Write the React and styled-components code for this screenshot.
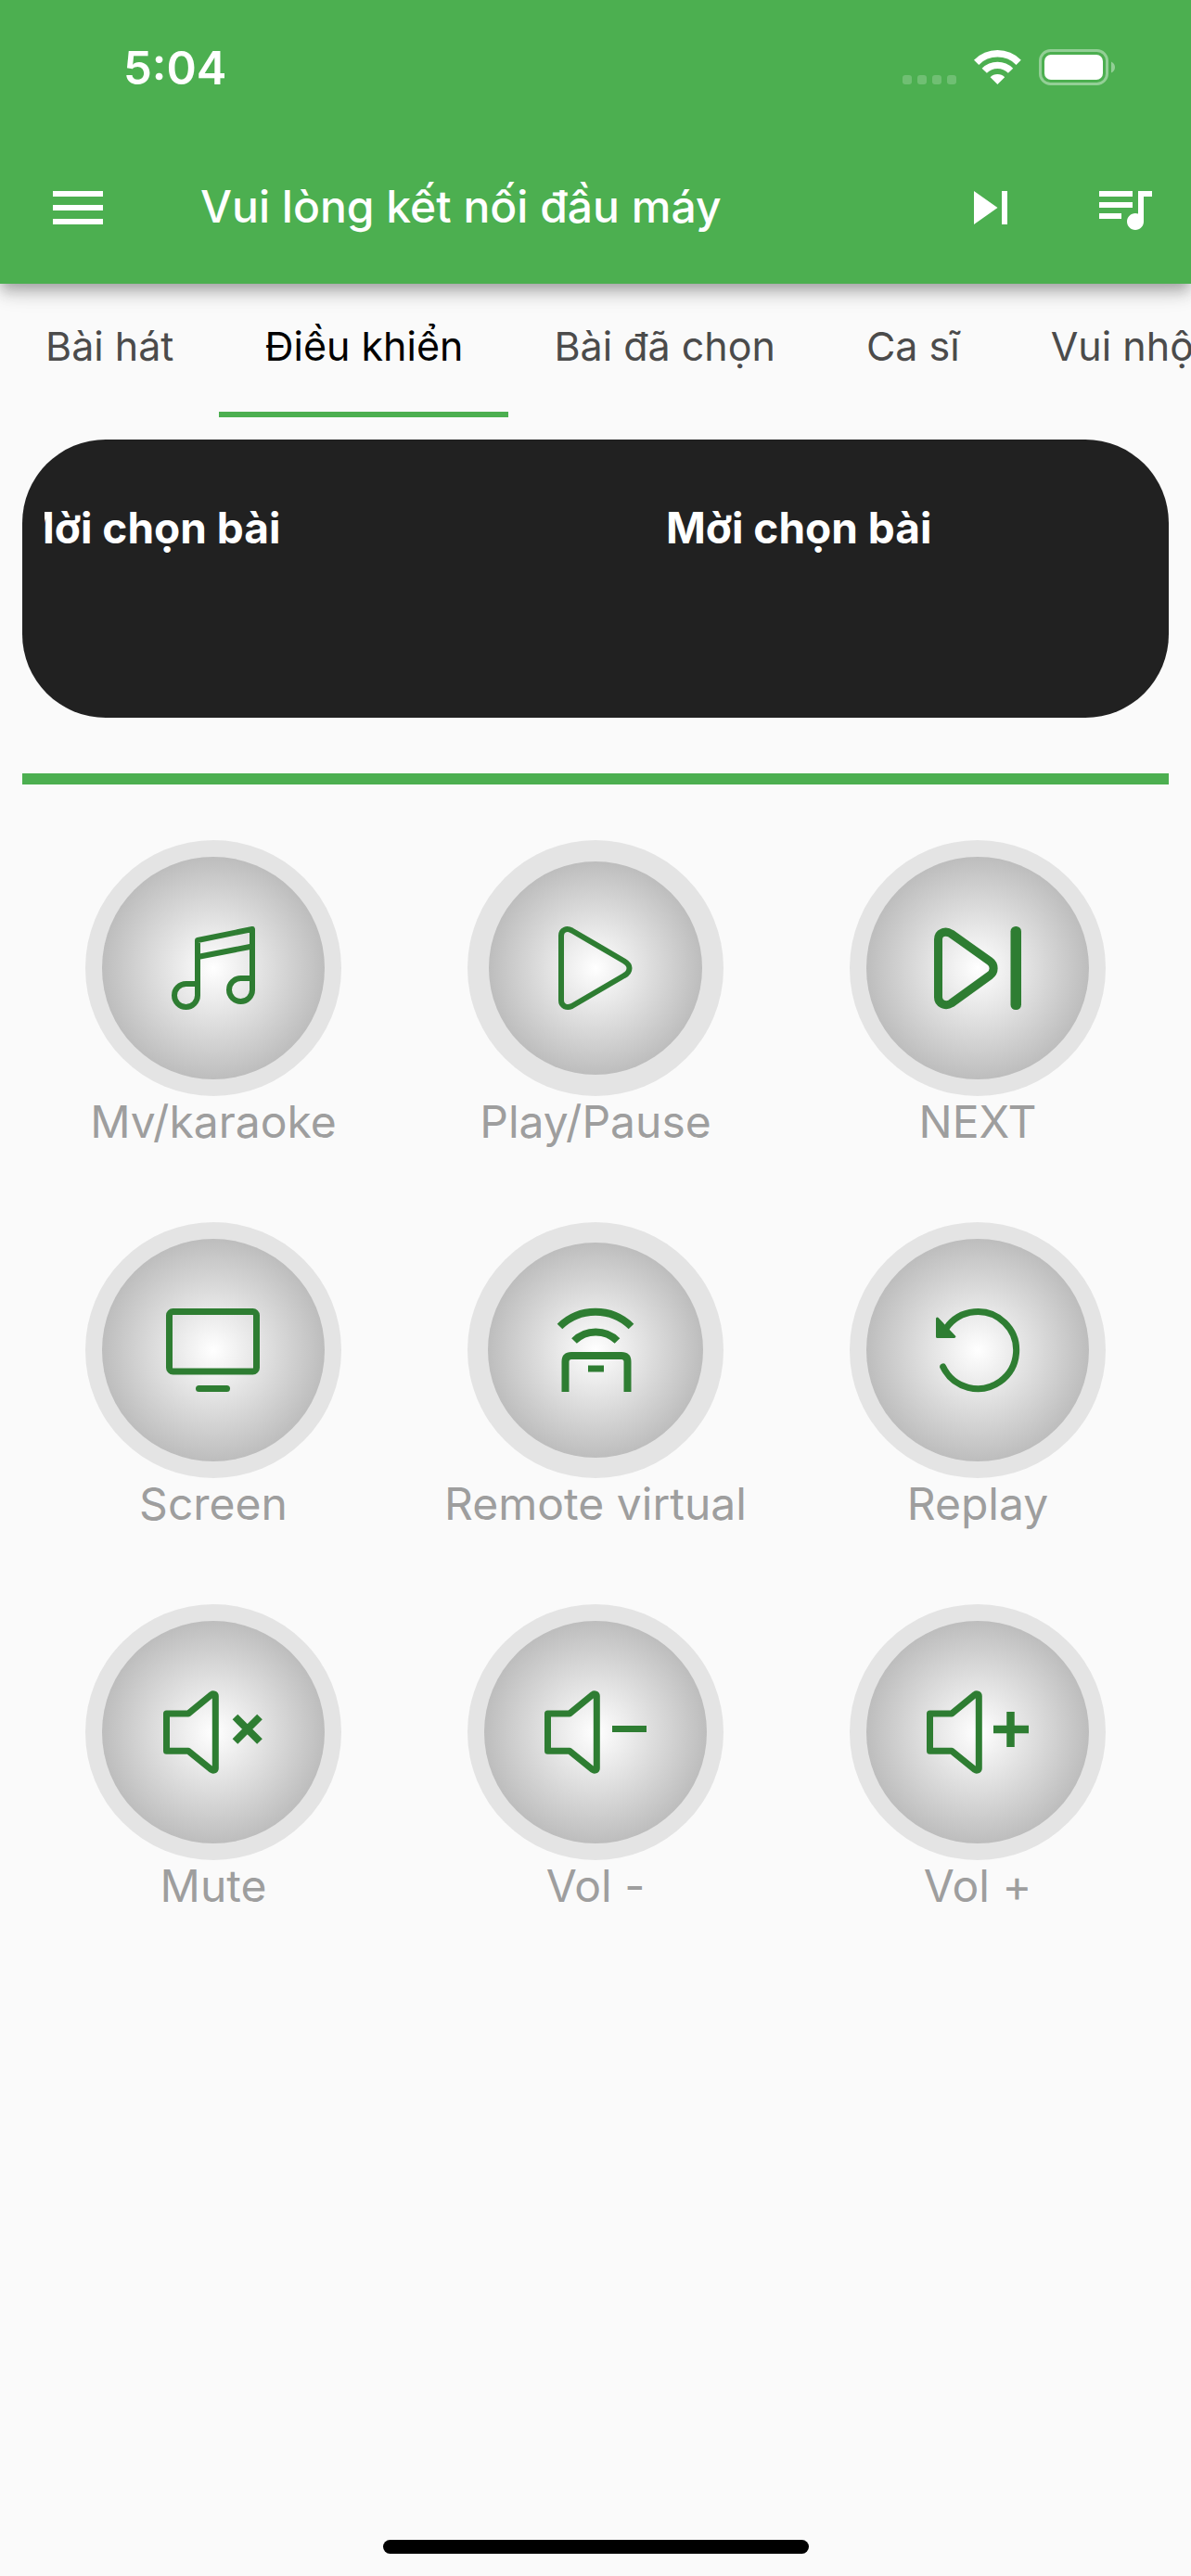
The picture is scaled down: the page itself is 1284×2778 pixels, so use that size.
import React, { useState } from 'react'
import styled, { createGlobalStyle } from 'styled-components'
import { MdMenu, MdSkipNext, MdQueueMusic } from 'react-icons/md'

const TABS = ['Bài hát', 'Điều khiển', 'Bài đã chọn', 'Ca sĩ', 'Vui nhộn']

const MusicIcon = () => (
  <Icon $stroke={6}>
    <path d="M43 77H30.5a12.5 12.5 0 1 0 12.5 12.5V30L102 18V83.5a12.5 12.5 0 1 1-12.5-12.5H102" />
    <path d="M43 48L102 36.5" />
  </Icon>
)

const PlayIcon = () => (
  <Icon $stroke={6}>
    <path d="M23 25C23 18.500 29 16.500 34.500 19.500L91 52.500Q96.500 56 96.500 60Q96.500 65 91 68L34.500 101C29 103.500 23 101 23 95Z" />
  </Icon>
)

const NextIcon = () => (
  <Icon $stroke={9}>
    <path d="M17.500 29C17.500 22 25 19 31.500 23L73 52.500C78.500 56.500 78.500 64 73 68L31.500 98C25 102 17.500 98 17.500 91.500Z" />
    <rect x="95.500" y="15" width="11.500" height="90" rx="5.500" fill="#2e7d32" stroke="none" />
  </Icon>
)

const ScreenIcon = () => (
  <Icon $stroke={7}>
    <rect x="12.500" y="18.500" width="94" height="64.500" rx="4" />
    <path d="M44.500 101.500H74.500" strokeLinecap="round" />
  </Icon>
)

const RemoteIcon = () => (
  <Icon $stroke={8}>
    <path d="M21.500 34.500A55 55 0 0 1 98.500 34.500" />
    <path d="M37 50A33 33 0 0 1 83.500 50" />
    <path d="M27.500 105V72.500Q27.500 66 34 66H88Q94.500 66 94.500 72.500V105" />
    <rect x="52" y="76.500" width="17" height="7" fill="#2e7d32" stroke="none" />
  </Icon>
)

const ReplayIcon = () => (
  <Icon $stroke={7}>
    <path d="M22.700 78A41.500 41.500 0 1 0 26 36.500" strokeLinecap="round" />
    <path d="M16.500 26L34.800 45.500H16.500Z" fill="#2e7d32" strokeWidth="3" />
  </Icon>
)

const speaker = 'M8.500 40H32L57 19.500C59 18 61.300 19 61.300 21V99C61.300 101 59 102 57 100.500L32 80.300H8.500Z'

const MuteIcon = () => (
  <Icon $stroke={7}>
    <path d={speaker} transform="translate(1 0)" />
    <path d="M83.500 43.500L110 70M110 43.500L83.500 70" strokeWidth="8" />
  </Icon>
)

const VolDownIcon = () => (
  <Icon $stroke={7}>
    <path d={speaker} />
    <path d="M78 56.500H115" />
  </Icon>
)

const VolUpIcon = () => (
  <Icon $stroke={7}>
    <path d={speaker} />
    <path d="M77 57H115M95.500 38V76" strokeWidth="8.500" />
  </Icon>
)

const CONTROLS = [
  { label: 'Mv/karaoke', icon: MusicIcon, size: 240 },
  { label: 'Play/Pause', icon: PlayIcon, size: 230 },
  { label: 'NEXT', icon: NextIcon, size: 240 },
  { label: 'Screen', icon: ScreenIcon, size: 240 },
  { label: 'Remote virtual', icon: RemoteIcon, size: 232 },
  { label: 'Replay', icon: ReplayIcon, size: 240 },
  { label: 'Mute', icon: MuteIcon, size: 240 },
  { label: 'Vol -', icon: VolDownIcon, size: 240 },
  { label: 'Vol +', icon: VolUpIcon, size: 240 },
]

const StatusIcons = () => (
  <svg width="230" height="40" viewBox="0 0 230 40" fill="#fff">
    <g opacity="0.2">
      <rect x="0" y="28" width="10" height="10" rx="3" />
      <rect x="16" y="28" width="10" height="10" rx="3" />
      <rect x="32" y="28" width="10" height="10" rx="3" />
      <rect x="48" y="28" width="10" height="10" rx="3" />
    </g>
    <g transform="translate(77 1)">
      <path d="M0 10.700A35.500 35.500 0 0 1 50.800 10.700L45.500 15.900A28 28 0 0 0 5.300 15.900Z" />
      <path d="M8.600 19.700A23.600 23.600 0 0 1 42.200 19.700L36.900 24.700A16.400 16.400 0 0 0 13.900 24.700Z" />
      <path d="M17.600 29.300A11 11 0 0 1 33.200 29.300L25.400 37Z" />
    </g>
    <rect x="148.500" y="1.500" width="72" height="36" rx="11" fill="none" stroke="#fff" strokeWidth="3" opacity="0.400" />
    <rect x="153" y="6" width="63" height="27" rx="7" />
    <path d="M225 13.500Q229 15.500 229 19.500T225 25.500Z" opacity="0.400" />
  </svg>
)

const App = () => {
  const [tab, setTab] = useState('Điều khiển')

  return (
    <Page>
      <GlobalStyle />
      <Header>
        <StatusBar>
          <Clock>5:04</Clock>
          <StatusIcons />
        </StatusBar>
        <Toolbar>
          <ToolButton $width={168} aria-label="Menu"><MdMenu /></ToolButton>
          <Title>Vui lòng kết nối đầu máy</Title>
          <ToolButton $width={144} aria-label="Skip"><MdSkipNext /></ToolButton>
          <ToolButton $width={144} aria-label="Queue"><MdQueueMusic /></ToolButton>
        </Toolbar>
      </Header>
      <Tabs role="tablist">
        {TABS.map(name => (
          <Tab key={name} role="tab" aria-selected={name === tab} $active={name === tab} onClick={() => setTab(name)}>
            {name}
          </Tab>
        ))}
      </Tabs>
      <Main>
        <NowPlaying>
          <Marquee>
            <MarqueeText>Mời chọn bài</MarqueeText>
            <MarqueeText>Mời chọn bài</MarqueeText>
          </Marquee>
        </NowPlaying>
        <Divider />
        <Controls>
          {CONTROLS.map(({ label, icon: ControlIcon, size }) => (
            <Control key={label}>
              <Ring><Disc $size={size}><ControlIcon /></Disc></Ring>
              <Label>{label}</Label>
            </Control>
          ))}
        </Controls>
      </Main>
      <HomeBar />
    </Page>
  )
}

const GlobalStyle = createGlobalStyle`
*{
  box-sizing:border-box;
}
body{
  margin:0;
  background:#fafafa;
  font-family:Inter, "Noto Sans", sans-serif;
}
button{
  border:0;
  padding:0;
  background:none;
  font-family:inherit;
  cursor:pointer;
}
`
const Page = styled.div`
display:flex;
flex-direction:column;
min-height:100vh;
overflow:hidden;
`
const Header = styled.header`
position:relative;
z-index:1;
background:#4caf50;
color:#fff;
box-shadow:0 6px 12px -3px rgba(0,0,0,0.2), 0 12px 15px 0 rgba(0,0,0,0.14), 0 3px 30px 0 rgba(0,0,0,0.12);
`
const StatusBar = styled.div`
display:flex;
align-items:center;
justify-content:space-between;
height:142px;
padding:4px 81px 0 133px;
`
const Clock = styled.span`
font-size:49px;
font-weight:600;
`
const Toolbar = styled.div`
display:flex;
align-items:center;
height:164px;
`
const ToolButton = styled.button`
display:flex;
align-items:center;
justify-content:center;
flex:none;
width:${props => props.$width}px;
height:144px;
color:#fff;
font-size:72px;
`
const Title = styled.h1`
flex:1;
margin:0;
padding:0 0 4px 48px;
font-size:48px;
font-weight:500;
white-space:nowrap;
`
const Tabs = styled.div`
display:flex;
height:144px;
overflow:hidden;
`
const Tab = styled.button`
flex:none;
padding:0 49px 4px;
border-bottom:6px solid ${props => (props.$active ? '#4caf50' : 'transparent')};
color:${props => (props.$active ? '#000' : '#4b4b4b')};
font-size:43px;
font-weight:400;
white-space:nowrap;
`
const Main = styled.main`
padding:24px;
`
const NowPlaying = styled.section`
height:300px;
padding:66px 24px;
border-radius:90px;
background:#212121;
`
const Marquee = styled.div`
display:flex;
justify-content:flex-end;
overflow:hidden;
`
const MarqueeText = styled.span`
flex:none;
width:702px;
padding-left:184px;
color:#fff;
font-size:46px;
font-weight:700;
line-height:58px;
white-space:nowrap;
`
const Divider = styled.div`
height:12px;
margin:60px 0 20px;
background:#4caf50;
`
const Controls = styled.div`
display:grid;
grid-template-columns:repeat(3, 1fr);
`
const Control = styled.button`
display:flex;
flex-direction:column;
align-items:center;
height:412px;
padding-top:40px;
`
const Ring = styled.span`
display:flex;
align-items:center;
justify-content:center;
width:276px;
height:276px;
border-radius:50%;
background:#e4e4e4;
`
const Disc = styled.span`
display:flex;
align-items:center;
justify-content:center;
width:${props => props.$size}px;
height:${props => props.$size}px;
border-radius:50%;
background:radial-gradient(closest-side, #fff, #bdbdbd);
`
const Icon = styled.svg.attrs({ viewBox: '0 0 120 120' })`
width:120px;
height:120px;
fill:none;
stroke:#2e7d32;
stroke-width:${props => props.$stroke}px;
stroke-linejoin:round;
overflow:visible;
`
const Label = styled.span`
color:#9e9e9e;
font-size:48px;
line-height:56px;
white-space:nowrap;
`
const HomeBar = styled.div`
width:459px;
height:15px;
margin:auto auto 24px;
border-radius:8px;
background:#000;
`
export default App
